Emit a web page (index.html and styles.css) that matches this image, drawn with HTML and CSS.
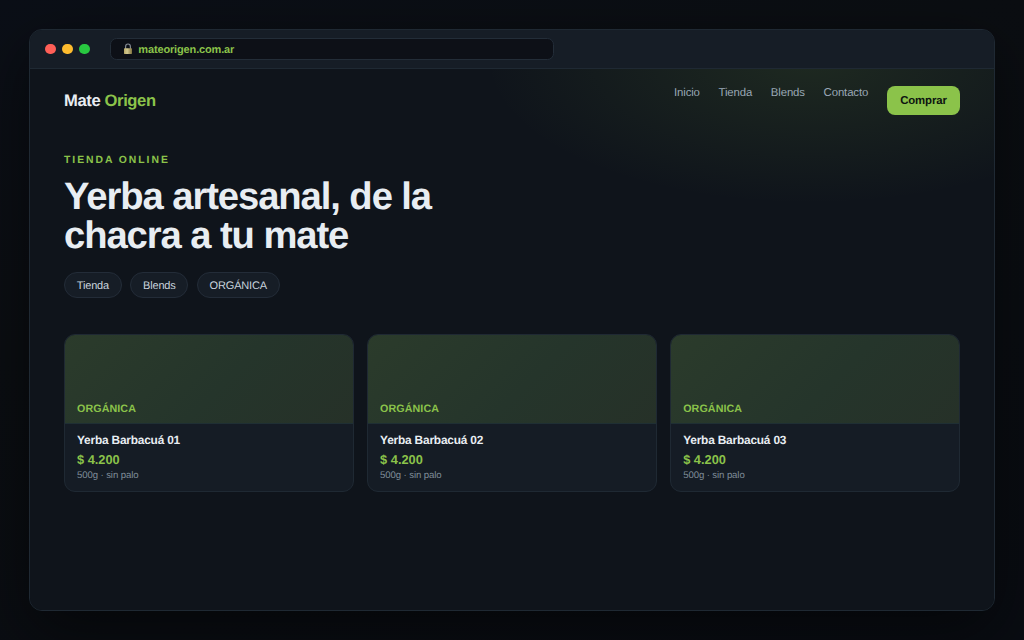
FILE: index.html
```html
<!DOCTYPE html>
<html lang="es">
<head>
<meta charset="utf-8">
<title>Mate Origen</title>
<link rel="stylesheet" href="styles.css">
</head>
<body>
<div class="browser">
  <div class="chrome">
    <div class="lights"><i class="red"></i><i class="yellow"></i><i class="green"></i></div>
    <div class="address">
      <svg class="lock" viewBox="0 0 10 12">
        <defs><linearGradient id="brass" x1="0" x2="1" y1="0" y2="0"><stop offset="0" stop-color="#b7a766"/><stop offset=".4" stop-color="#d4ca91"/><stop offset="1" stop-color="#81723e"/></linearGradient></defs>
        <path d="M2.6 6V3.7a2.4 2.7 0 0 1 4.8 0V6" fill="none" stroke="#858b94" stroke-width="1.15"/>
        <rect x="1" y="5.2" width="8" height="5.7" rx=".6" fill="url(#brass)"/>
      </svg>
      <span>mateorigen.com.ar</span>
    </div>
  </div>
  <main class="page">
    <header class="header">
      <div class="logo">Mate <span>Origen</span></div>
      <nav class="nav"><a>Inicio</a><a>Tienda</a><a>Blends</a><a>Contacto</a><a class="buy">Comprar</a></nav>
    </header>
    <div class="eyebrow">TIENDA ONLINE</div>
    <h1 class="title">Yerba artesanal, de la<br>chacra a tu mate</h1>
    <div class="chips"><span>Tienda</span><span>Blends</span><span>ORGÁNICA</span></div>
    <section class="cards">
      <article class="card"><div class="cover">ORGÁNICA</div><div class="info"><div class="name">Yerba Barbacuá 01</div><div class="price">$ 4.200</div><div class="meta">500g · sin palo</div></div></article>
      <article class="card"><div class="cover">ORGÁNICA</div><div class="info"><div class="name">Yerba Barbacuá 02</div><div class="price">$ 4.200</div><div class="meta">500g · sin palo</div></div></article>
      <article class="card"><div class="cover">ORGÁNICA</div><div class="info"><div class="name">Yerba Barbacuá 03</div><div class="price">$ 4.200</div><div class="meta">500g · sin palo</div></div></article>
    </section>
  </main>
</div>
</body>
</html>
```
FILE: styles.css
```css
* { box-sizing: border-box; }
body {
  margin: 0;
  height: 640px;
  padding: 29px;
  overflow: hidden;
  font-family: "Liberation Sans", Arial, sans-serif;
  text-rendering: geometricPrecision;
  background: linear-gradient(160deg, #0b0f17 0%, #0b0e12 35%, #090c12 100%);
  color: #e8edf2;
}
.browser {
  height: 582px;
  display: flex;
  flex-direction: column;
  border: 1px solid #1f2933;
  border-radius: 13px;
  overflow: hidden;
  background: #0f141b;
  box-shadow: 0 20px 64px rgba(0, 0, 0, .5);
}
.chrome {
  height: 39px;
  flex: none;
  display: flex;
  align-items: center;
  padding: 0 15px;
  gap: 20px;
  background: #161d26;
  border-bottom: 1px solid #1f2933;
}
.lights { display: flex; gap: 6.4px; }
.lights i { width: 10.7px; height: 10.7px; border-radius: 50%; }
.red { background: #ff5f57; }
.yellow { background: #febc2e; }
.green { background: #28c840; }
.address {
  width: 444px;
  height: 22px;
  display: flex;
  align-items: center;
  gap: 5.5px;
  padding: 0 12px;
  border: 1px solid #232d38;
  border-radius: 6.5px;
  background: #0d1017;
  color: #8bc34a;
  font-size: 11px;
  font-weight: 700;
  letter-spacing: -.15px;
}
.address span { padding-top: 1px; }
.lock { width: 10px; height: 12px; }
.page {
  flex: 1;
  padding: 17px 34px 0;
  background: radial-gradient(ellipse 325px 145px at 780px -10px, rgba(139, 195, 74, .12), transparent), #0f141b;
}
.header { height: 29px; display: flex; justify-content: space-between; align-items: center; }
.logo { padding-top: 1px; font-size: 16.6px; font-weight: 700; letter-spacing: -.38px; }
.logo span { color: #8bc34a; }
.nav { display: flex; align-items: flex-start; gap: 18.7px; font-size: 11.4px; line-height: 15px; letter-spacing: -.13px; color: #9aa8b6; }
.buy {
  height: 29px;
  padding: 8px 13.3px;
  border-radius: 8px;
  background: #8bc34a;
  color: #0d1410;
  font-weight: 700;
}
.eyebrow { margin-top: 40px; font-size: 10.4px; line-height: 12px; font-weight: 700; letter-spacing: 1.95px; color: #8bc34a; }
.title { margin: 10px 0 0; font-size: 38.2px; line-height: 39px; letter-spacing: -1.07px; }
.chips { display: flex; gap: 8.4px; margin-top: 17px; }
.chips span {
  height: 26px;
  padding: 0 11.8px;
  border: 1px solid #232c38;
  border-radius: 14px;
  background: #161d26;
  color: #c9d3dd;
  font-size: 11px;
  letter-spacing: -.17px;
  line-height: 26px;
}
.cards { display: grid; grid-template-columns: repeat(3, 1fr); gap: 13.3px; margin-top: 36px; }
.card { height: 157.5px; border: 1px solid #1f2933; border-radius: 11px; overflow: hidden; background: #151c25; }
.cover {
  height: 89px;
  display: flex;
  align-items: flex-end;
  padding: 0 12px 8px;
  border-bottom: 1px solid #1f2f34;
  background: linear-gradient(135deg, #2b3b2b, #25352b 55%, #263128);
  color: #8bc34a;
  font-size: 10.7px;
  line-height: 12px;
  font-weight: 700;
  letter-spacing: .1px;
}
.info { padding: 10px 12px; }
.name { font-size: 11.9px; line-height: 13px; font-weight: 700; letter-spacing: -.2px; }
.price { margin-top: 5px; font-size: 12.8px; line-height: 15px; font-weight: 700; color: #8bc34a; }
.meta { margin-top: 3px; font-size: 9.6px; line-height: 11px; letter-spacing: -.1px; color: #7f8c99; }
```
